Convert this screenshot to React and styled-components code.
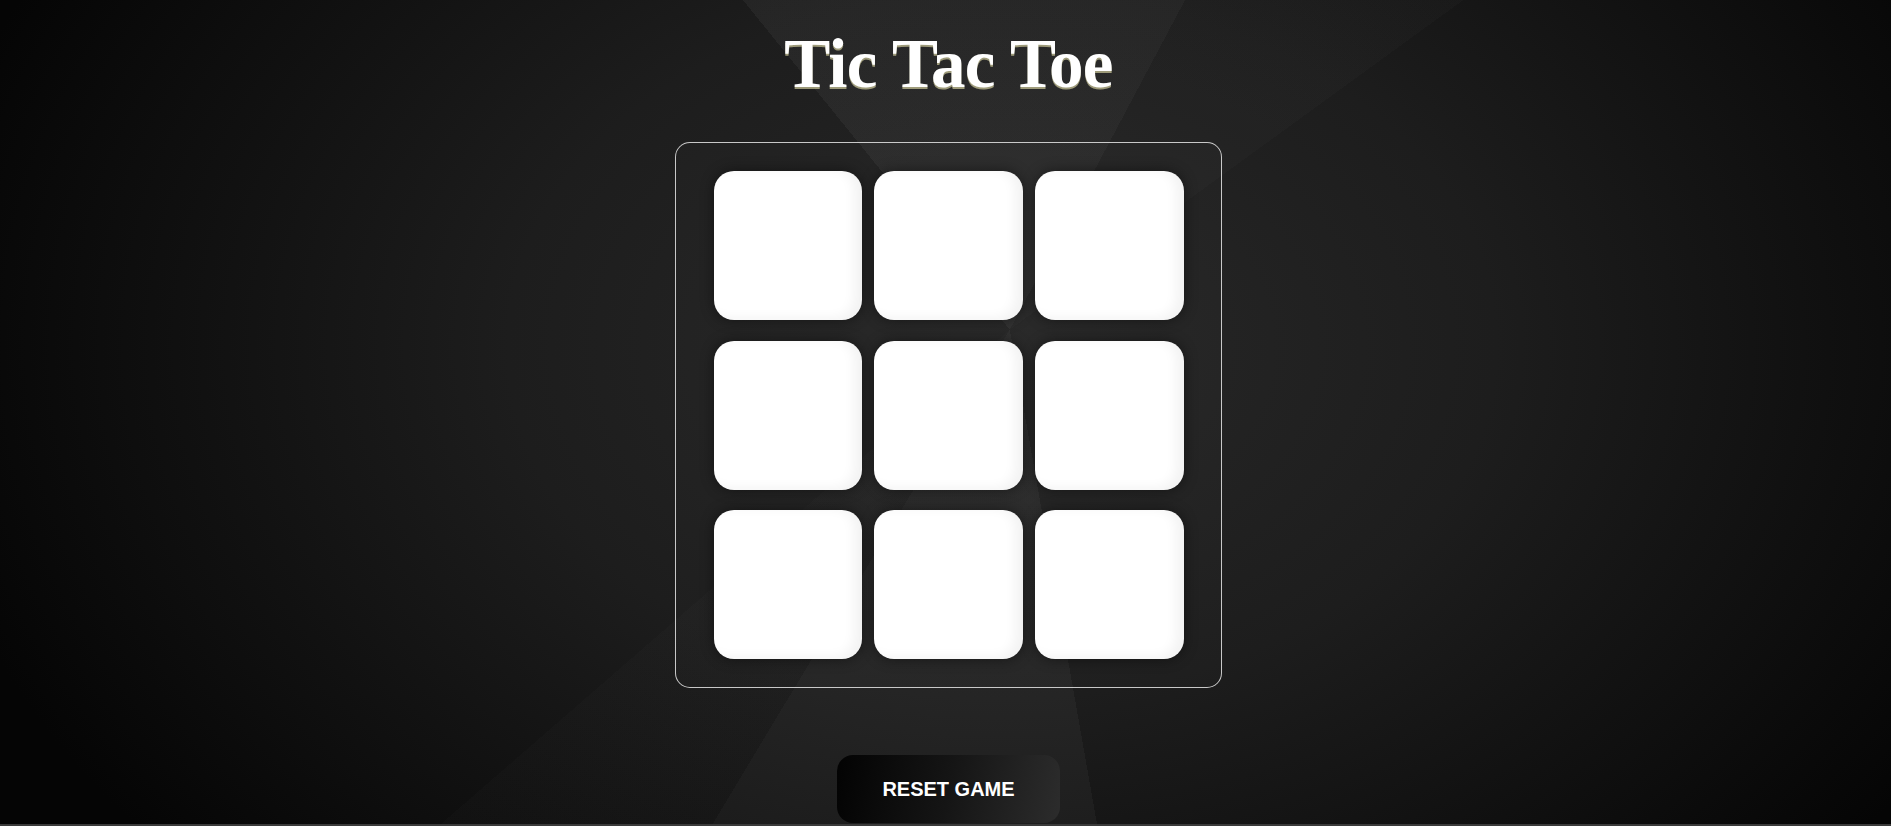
import React from "react";
import styled, { createGlobalStyle } from "styled-components";

const Global = createGlobalStyle`
  html { background: #3a3a3a; }
  body { margin: 0; }
  * { box-sizing: border-box; }
`;

const Page = styled.main`
  height: 824px;
  overflow: hidden;
  display: flex;
  flex-direction: column;
  align-items: center;
  padding: 30px 0 0 6px;
  background:
    conic-gradient(
      from 0deg at 53.4% 40%,
      rgba(255, 255, 255, 0.045) 0deg 28deg,
      rgba(255, 255, 255, 0.014) 28deg 54deg,
      rgba(255, 255, 255, 0) 54deg 170deg,
      rgba(255, 255, 255, 0.035) 170deg 211deg,
      rgba(255, 255, 255, 0.012) 211deg 229deg,
      rgba(255, 255, 255, 0) 229deg 321deg,
      rgba(255, 255, 255, 0.045) 321deg 360deg
    ),
    radial-gradient(
      ellipse 58% 95% at 53% 42%,
      #282828 0%,
      #1d1d1d 45%,
      #0e0e0e 80%,
      #050505 100%
    );
`;

const Title = styled.h1`
  margin: 0;
  font-family: "Liberation Serif", "Times New Roman", serif;
  font-weight: 700;
  font-size: 69px;
  line-height: 69px;
  letter-spacing: -0.7px;
  color: #ffffff;
  text-shadow: 0 1.5px 0 rgba(255, 250, 190, 0.55);
`;

const Board = styled.div`
  margin-top: 43px;
  width: 547px;
  height: 546px;
  padding: 28px 37.5px;
  border: 1px solid rgba(230, 230, 230, 0.85);
  border-radius: 15px;
  background: rgba(255, 255, 255, 0.01);
  display: grid;
  grid-template-columns: repeat(3, 148.5px);
  grid-template-rows: repeat(3, 149px);
  column-gap: 12.25px;
  row-gap: 20.5px;
`;

const Cell = styled.button`
  border: none;
  padding: 0;
  border-radius: 20px;
  background: #ffffff;
  cursor: pointer;
  box-shadow:
    0 0 14px rgba(0, 0, 0, 0.45),
    inset -8px -2px 12px rgba(0, 0, 0, 0.05);
`;

const ResetButton = styled.button`
  margin-top: 67px;
  width: 223px;
  height: 68px;
  border: none;
  border-radius: 16px;
  background: linear-gradient(100deg, #030303 0%, #151515 50%, #2c2c2c 100%);
  color: #ffffff;
  font-family: "Liberation Sans", Arial, sans-serif;
  font-weight: 700;
  font-size: 20px;
  cursor: pointer;
`;

export default function App() {
  const cells = Array.from({ length: 9 }, (_, i) => i);
  return (
    <>
      <Global />
      <Page>
        <Title>Tic Tac Toe</Title>
        <Board>
          {cells.map((i) => (
            <Cell key={i} aria-label={`cell ${i + 1}`} />
          ))}
        </Board>
        <ResetButton>RESET GAME</ResetButton>
      </Page>
    </>
  );
}
